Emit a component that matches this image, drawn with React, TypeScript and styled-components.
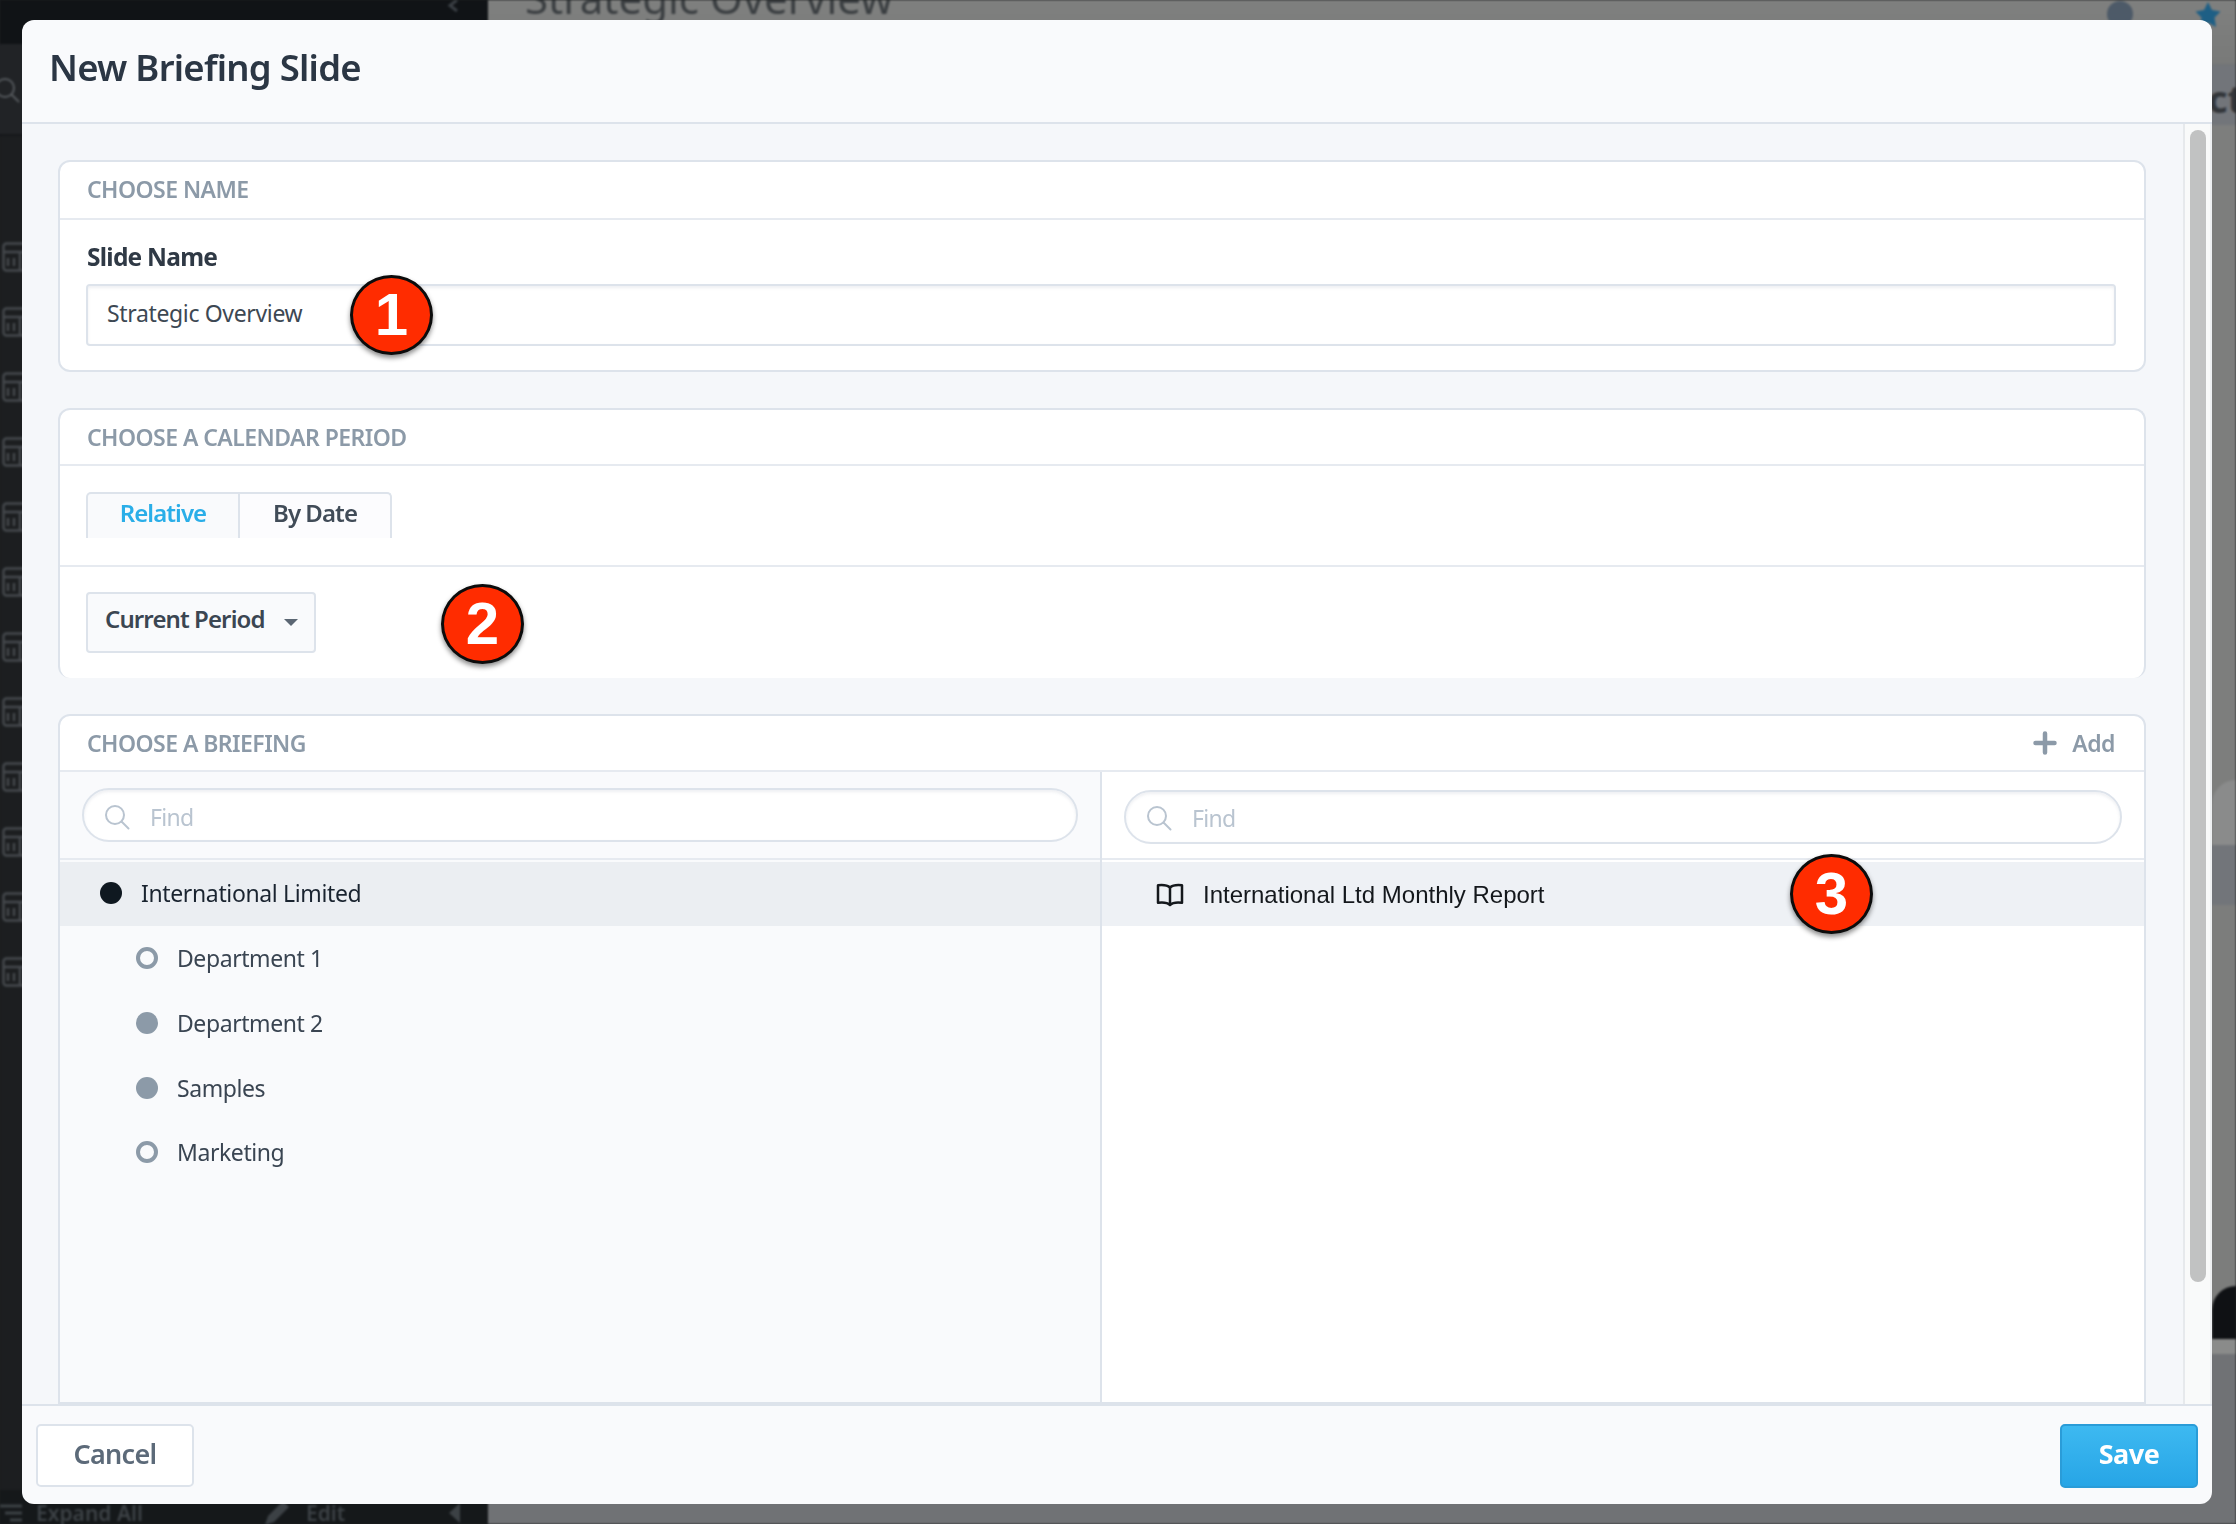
import React from "react";
import styled, { createGlobalStyle } from "styled-components";

const UI_FONT = `"Noto Sans", "Liberation Sans", sans-serif`;
const HELVETICA = `"Liberation Sans", Arial, sans-serif`;

const GlobalStyle = createGlobalStyle`
  html, body {
    margin: 0;
    padding: 0;
    background: #1c1e20;
  }
  * {
    box-sizing: border-box;
  }
`;

const Stage = styled.div`
  position: relative;
  width: 2236px;
  height: 1524px;
  overflow: hidden;
  font-family: ${UI_FONT};
`;

/* the blurred app behind the dialog */
const BackApp = styled.div`
  display: flex;
  width: 100%;
  height: 100%;
  filter: blur(1.2px);
`;

const Sidebar = styled.aside`
  width: 488px;
  display: flex;
  flex-direction: column;
  background: #1c1e20;
  color: #3e4347;
`;

const SidebarTop = styled.div`
  height: 44px;
  background: #101316;
  display: flex;
  justify-content: flex-end;
  padding: 0 28px 0 0;
`;

const SidebarSearch = styled.div`
  height: 92px;
  background: #212326;
  border-bottom: 2px solid #15171a;
  padding: 33px 0 0 0;
  color: #54585c;
  margin-left: -6px;
`;

const SidebarIcons = styled.div`
  flex: 1;
  display: flex;
  flex-direction: column;
  gap: 35px;
  padding: 106px 0 0 2px;
`;

const SidebarFoot = styled.div`
  height: 34px;
  background: #15181a;
  display: flex;
  align-items: center;
  gap: 14px;
  padding-top: 12px;
  font-size: 21px;
  font-weight: 600;
  color: #3c4145;
`;

const FootEdit = styled.span`
  margin-left: 106px;
  display: flex;
  align-items: center;
  gap: 15px;
`;

const FootArrow = styled.span`
  margin-left: 90px;
  width: 0;
  height: 0;
  border-top: 10px solid transparent;
  border-bottom: 10px solid transparent;
  border-right: 11px solid #3c4145;
`;

const MainArea = styled.main`
  flex: 1;
  display: flex;
  flex-direction: column;
  overflow: hidden;
  background: #7a7b7a;
`;

const MainBar = styled.div`
  height: 65px;
  display: flex;
  padding: 0 0 0 37px;
  background: linear-gradient(#7f807f, #797a79);
  border-bottom: 1px solid #707274;
`;

const MainTitle = styled.div`
  font-size: 42px;
  line-height: 44px;
  margin-top: -24px;
  color: #3a3e41;
`;

const MainBarIcons = styled.div`
  margin-left: auto;
  display: flex;
  gap: 62px;
  margin-right: 15px;
`;

const MonthRow = styled.div`
  height: 60px;
  background: #72757a;
  text-align: right;
  font-size: 38px;
  font-weight: 700;
  line-height: 66px;
  color: #33363a;
  margin-right: -8px;
`;

const ChartFill = styled.div<{ $h: number; $bg: string }>`
  height: ${(p) => p.$h}px;
  background: ${(p) => p.$bg};
  display: flex;
  justify-content: flex-end;
  align-items: flex-end;
`;

const Head = styled.div<{ $bg: string; $w: number; $h: number }>`
  width: ${(p) => p.$w}px;
  height: ${(p) => p.$h}px;
  border-radius: ${(p) => p.$h}px 0 0 0;
  background: ${(p) => p.$bg};
`;

const MainBottom = styled.div`
  flex: 1;
  background: #707275;
`;

/* dialog */
const Overlay = styled.div`
  position: absolute;
  inset: 0;
  padding: 20px 24px 20px 22px;
  display: flex;
`;

const Modal = styled.section`
  flex: 1;
  display: flex;
  flex-direction: column;
  border-radius: 12px;
  overflow: hidden;
  background: #f9fafc;
`;

const ModalHeader = styled.header`
  height: 104px;
  flex: none;
  display: flex;
  align-items: center;
  padding: 0 0 8px 27px;
  border-bottom: 2px solid #dde3eb;
`;

const ModalTitle = styled.h1`
  margin: 0;
  font-size: 36.5px;
  font-weight: 600;
  letter-spacing: -0.75px;
  color: #2b3644;
`;

const ModalBody = styled.div`
  flex: 1;
  min-height: 0;
  display: flex;
`;

const ScrollArea = styled.div`
  flex: 1;
  min-width: 0;
  display: flex;
  flex-direction: column;
  gap: 36px;
  padding: 36px 37px 0 36px;
  background: #f5f7fa;
`;

const ScrollGutter = styled.div`
  width: 29px;
  flex: none;
  padding: 6px 0 0 5px;
  background: #f9fafa;
  border-left: 2px solid #e6e9ec;
  border-right: 2px solid #eef0f2;
`;

const ScrollThumb = styled.div`
  width: 16px;
  height: 1152px;
  border-radius: 8px;
  background: #c1c2c2;
`;

const Panel = styled.div<{ $open?: boolean; $grow?: boolean }>`
  display: flex;
  flex-direction: column;
  flex: ${(p) => (p.$grow ? "1" : "none")};
  min-height: 0;
  background: #fff;
  border: 2px solid #dde3eb;
  border-bottom: ${(p) => (p.$open ? "none" : "2px solid #dde3eb")};
  border-radius: 12px 12px ${(p) => (p.$grow ? "0 0" : "12px 12px")};
`;

const PanelHead = styled.div<{ $h: number }>`
  height: ${(p) => p.$h}px;
  flex: none;
  display: flex;
  align-items: center;
  justify-content: space-between;
  padding: 0 29px 0 27px;
  border-bottom: 2px solid #e6eaf0;
`;

const NameHead = styled(PanelHead)`
  padding-bottom: 2px;
`;

const PanelLabel = styled.h2`
  margin: 0;
  font-size: 23px;
  font-weight: 600;
  letter-spacing: -0.55px;
  text-transform: uppercase;
  color: #8c9aa8;
`;

const AddAction = styled.div`
  display: flex;
  align-items: center;
  gap: 15px;
  font-size: 23px;
  font-weight: 600;
  letter-spacing: -0.5px;
  color: #8c9aa8;
`;

const NameBody = styled.div`
  padding: 23px 28px 24px 26px;
`;

const FieldLabel = styled.label`
  display: block;
  height: 28px;
  margin-bottom: 13px;
  padding-left: 1px;
  font-size: 24.5px;
  line-height: 28px;
  font-weight: 700;
  letter-spacing: -0.75px;
  color: #2f3945;
`;

const InputWrap = styled.div`
  position: relative;
`;

const TextInput = styled.div`
  height: 62px;
  display: flex;
  align-items: center;
  padding: 0 19px 4px;
  background: #fff;
  border: 2px solid #dde3eb;
  border-radius: 4px;
  box-shadow: inset 0 2px 3px rgba(120, 135, 155, 0.12);
  font-size: 23px;
  letter-spacing: -0.35px;
  color: #3d4853;
`;

const TabSection = styled.div`
  height: 101px;
  flex: none;
  padding: 26px 26px 0;
  border-bottom: 2px solid #e6eaf0;
`;

const Tabs = styled.div`
  display: flex;
  width: 306px;
  height: 46px;
`;

const Tab = styled.div<{ $active?: boolean; $first?: boolean }>`
  flex: 1;
  display: flex;
  align-items: center;
  justify-content: center;
  padding-bottom: 7px;
  background: ${(p) => (p.$active ? "#f9fafc" : "#fcfcfe")};
  border: 2px solid #dde3eb;
  border-bottom: none;
  border-left: ${(p) => (p.$first ? "2px solid #dde3eb" : "none")};
  border-radius: ${(p) => (p.$first ? "5px 0 0 0" : "0 5px 0 0")};
  font-size: 24px;
  font-weight: 600;
  letter-spacing: -0.95px;
  color: ${(p) => (p.$active ? "#2aaee8" : "#414c58")};
`;

const PeriodSection = styled.div`
  position: relative;
  padding: 25px 26px 25px;
`;

const SelectBox = styled.div`
  width: 230px;
  height: 61px;
  display: flex;
  align-items: center;
  justify-content: space-between;
  padding: 0 16px 8px 17px;
  background: #f9fafc;
  border: 2px solid #dde3eb;
  border-radius: 4px;
  font-size: 24px;
  font-weight: 600;
  letter-spacing: -0.9px;
  color: #3b4652;
`;

const Caret = styled.span`
  width: 0;
  height: 0;
  margin-top: 8px;
  border-left: 7px solid transparent;
  border-right: 7px solid transparent;
  border-top: 7px solid #5b6673;
`;

const Columns = styled.div`
  flex: 1;
  min-height: 0;
  display: flex;
`;

const OrgColumn = styled.div`
  width: 1042px;
  flex: none;
  background: #f9fafc;
  border-right: 2px solid #dde3eb;
`;

const ReportColumn = styled.div`
  flex: 1;
  min-width: 0;
  background: #fff;
`;

const FindRow = styled.div<{ $top: number }>`
  height: 88px;
  padding: ${(p) => p.$top}px 22px 0;
  border-bottom: 2px solid #e6eaf0;
  margin-bottom: 2px;
`;

const FindBox = styled.div<{ $drop: number }>`
  height: 54px;
  display: flex;
  align-items: center;
  gap: 20px;
  padding: ${(p) => p.$drop}px 0 0 20px;
  background: #fff;
  border: 2px solid #dde3eb;
  border-radius: 27px;
  box-shadow: inset 0 2px 3px rgba(120, 135, 155, 0.12);
  color: #b9c4d0;
`;

const FindPlaceholder = styled.span`
  font-size: 23px;
  letter-spacing: -0.7px;
  color: #b9c4d0;
`;

const TreeRow = styled.div<{ $child?: boolean; $selected?: boolean }>`
  height: ${(p) => (p.$selected ? 64 : 64.7)}px;
  display: flex;
  align-items: center;
  gap: 19px;
  padding: 0 0 ${(p) => (p.$selected ? 2 : 0)}px ${(p) => (p.$child ? 76 : 40)}px;
  background: ${(p) => (p.$selected ? "#ebeef2" : "transparent")};
  font-size: 23px;
  letter-spacing: ${(p) => (p.$selected ? -0.36 : -0.42)}px;
  color: ${(p) => (p.$selected ? "#1a2430" : "#3a4552")};
`;

const Dot = styled.span<{ $kind: "root" | "empty" | "full" }>`
  width: 22px;
  height: 22px;
  flex: none;
  border-radius: 50%;
  background: ${(p) => (p.$kind === "root" ? "#0f1820" : p.$kind === "full" ? "#8c9aa8" : "transparent")};
  border: ${(p) => (p.$kind === "empty" ? "4px solid #8c9aa8" : "none")};
`;

const ReportRow = styled.div`
  position: relative;
  height: 64px;
  display: flex;
  align-items: center;
  gap: 19px;
  padding: 2px 0 0 54px;
  background: #eef1f5;
  font-family: ${HELVETICA};
  font-size: 24px;
  color: #14181c;
`;

const Callout = styled.div<{ $left: number; $top: number }>`
  position: absolute;
  left: ${(p) => p.$left}px;
  top: ${(p) => p.$top}px;
  width: 83px;
  height: 80px;
  display: flex;
  align-items: center;
  justify-content: center;
  border-radius: 50%;
  border: 3px solid #0c0c0c;
  background: #ff2c00;
  box-shadow: 0 3px 5px rgba(0, 0, 0, 0.45);
  font-family: ${HELVETICA};
  font-size: 60px;
  font-weight: 700;
  line-height: 1;
  color: #fff;
`;

const ModalFooter = styled.footer`
  height: 100px;
  flex: none;
  display: flex;
  justify-content: space-between;
  padding: 18px 14px 0 14px;
  border-top: 2px solid #dde3eb;
`;

const CancelButton = styled.button`
  width: 158px;
  height: 63px;
  background: #fff;
  border: 2px solid #dde3eb;
  border-radius: 5px;
  font-family: ${UI_FONT};
  font-size: 27px;
  font-weight: 600;
  letter-spacing: -0.7px;
  padding: 0 0 4px;
  color: #5c6a79;
`;

const SaveButton = styled.button`
  width: 138px;
  height: 64px;
  background: linear-gradient(#3db9f1, #27a5e6);
  border: 2px solid #2a9cd8;
  border-radius: 5px;
  font-family: ${UI_FONT};
  font-size: 27px;
  font-weight: 700;
  letter-spacing: -0.5px;
  padding: 0 0 6px;
  color: #fff;
`;

const SearchGlyph = () => (
  <svg width="26" height="26" viewBox="0 0 26 26" fill="none" stroke="currentColor" strokeWidth="2" strokeLinecap="round">
    <circle cx="11" cy="11" r="9" />
    <path d="M17.5 17.5L24.5 24.5" />
  </svg>
);

const PlusGlyph = () => (
  <svg width="24" height="24" viewBox="0 0 24 24" fill="none" stroke="currentColor" strokeWidth="4.5" strokeLinecap="round">
    <path d="M12 2.5V21.5M2.5 12H21.5" />
  </svg>
);

const BookGlyph = () => (
  <svg width="28" height="24" viewBox="0 0 28 24" fill="none" stroke="#14181c" strokeWidth="2.5" strokeLinejoin="round">
    <path d="M14 4.5C11.5 2.2 7 1.6 2 2.2V19.8C7 19.2 11.5 19.6 14 22C16.5 19.6 21 19.2 26 19.8V2.2C21 1.6 16.5 2.2 14 4.5Z" />
    <path d="M14 4.5V22" />
  </svg>
);

const TableGlyph = () => (
  <svg width="30" height="30" viewBox="0 0 30 30" fill="none" stroke="#45494d" strokeWidth="2.4">
    <rect x="1.5" y="1.5" width="27" height="27" rx="3" />
    <path d="M1.5 10H28.5M6 16V24M12 16V24M18 10V28.5" />
  </svg>
);

const BackChevron = () => (
  <svg width="14" height="14" viewBox="0 0 14 14" fill="none" stroke="#3a3f44" strokeWidth="3">
    <path d="M11 0L4 5.5L11 11" />
  </svg>
);

const ListGlyph = () => (
  <svg width="22" height="22" viewBox="0 0 22 22" fill="none" stroke="#3c4145" strokeWidth="3">
    <path d="M0 4H22M5 11H22M10 18H22" />
  </svg>
);

const PencilGlyph = () => (
  <svg width="28" height="28" viewBox="0 0 28 28" fill="#3c4145">
    <path d="M2 26L5 17L20 2L26 8L11 23Z" />
  </svg>
);

const InfoGlyph = () => (
  <svg width="26" height="46" viewBox="0 0 26 46" fill="#4d5a68">
    <circle cx="13" cy="14" r="13" />
  </svg>
);

const StarGlyph = () => (
  <svg width="26" height="46" viewBox="0 0 26 46" fill="#1e5f85">
    <path d="M13 2L17 10L25.5 11.5L19.5 17.5L21 27L13 22.5L5 27L6.5 17.5L.5 11.5L9 10Z" />
  </svg>
);

const org = [
  { name: "Department 1", kind: "empty" as const },
  { name: "Department 2", kind: "full" as const },
  { name: "Samples", kind: "full" as const },
  { name: "Marketing", kind: "empty" as const },
];

const App = () => {
  return (
    <Stage>
      <GlobalStyle />

      <BackApp>
        <Sidebar>
          <SidebarTop>
            <BackChevron />
          </SidebarTop>
          <SidebarSearch>
            <SearchGlyph />
          </SidebarSearch>
          <SidebarIcons>
            {Array.from({ length: 12 }, (_, i) => (
              <TableGlyph key={i} />
            ))}
          </SidebarIcons>
          <SidebarFoot>
            <ListGlyph />
            Expand All
            <FootEdit>
              <PencilGlyph />
              Edit
            </FootEdit>
            <FootArrow />
          </SidebarFoot>
        </Sidebar>
        <MainArea>
          <MainBar>
            <MainTitle>Strategic Overview</MainTitle>
            <MainBarIcons>
              <InfoGlyph />
              <StarGlyph />
            </MainBarIcons>
          </MainBar>
          <MonthRow>Oct</MonthRow>
          <ChartFill $h={720} $bg="#7d7e7d">
            <Head $bg="#8a8b8b" $w={24} $h={65} />
          </ChartFill>
          <ChartFill $h={60} $bg="#72757a" />
          <ChartFill $h={434} $bg="#7c7d7c">
            <Head $bg="#0f1114" $w={24} $h={53} />
          </ChartFill>
          <ChartFill $h={15} $bg="#8a8b8a" />
          <MainBottom />
        </MainArea>
      </BackApp>

      <Overlay>
        <Modal>
          <ModalHeader>
            <ModalTitle>New Briefing Slide</ModalTitle>
          </ModalHeader>

          <ModalBody>
            <ScrollArea>
              <Panel>
                <NameHead $h={58}>
                  <PanelLabel>Choose Name</PanelLabel>
                </NameHead>
                <NameBody>
                  <FieldLabel>Slide Name</FieldLabel>
                  <InputWrap>
                    <TextInput>Strategic Overview</TextInput>
                    <Callout $left={264} $top={-9}>1</Callout>
                  </InputWrap>
                </NameBody>
              </Panel>

              <Panel $open>
                <PanelHead $h={56}>
                  <PanelLabel>Choose a Calendar Period</PanelLabel>
                </PanelHead>
                <TabSection>
                  <Tabs>
                    <Tab $active $first>Relative</Tab>
                    <Tab>By Date</Tab>
                  </Tabs>
                </TabSection>
                <PeriodSection>
                  <SelectBox>
                    Current Period
                    <Caret />
                  </SelectBox>
                  <Callout $left={381} $top={17}>2</Callout>
                </PeriodSection>
              </Panel>

              <Panel $grow>
                <PanelHead $h={56}>
                  <PanelLabel>Choose a Briefing</PanelLabel>
                  <AddAction>
                    <PlusGlyph />
                    Add
                  </AddAction>
                </PanelHead>
                <Columns>
                  <OrgColumn>
                    <FindRow $top={16}>
                      <FindBox $drop={4}>
                        <SearchGlyph />
                        <FindPlaceholder>Find</FindPlaceholder>
                      </FindBox>
                    </FindRow>
                    <TreeRow $selected>
                      <Dot $kind="root" />
                      International Limited
                    </TreeRow>
                    {org.map((item) => (
                      <TreeRow $child key={item.name}>
                        <Dot $kind={item.kind} />
                        {item.name}
                      </TreeRow>
                    ))}
                  </OrgColumn>
                  <ReportColumn>
                    <FindRow $top={18}>
                      <FindBox $drop={2}>
                        <SearchGlyph />
                        <FindPlaceholder>Find</FindPlaceholder>
                      </FindBox>
                    </FindRow>
                    <ReportRow>
                      <BookGlyph />
                      International Ltd Monthly Report
                      <Callout $left={688} $top={-8}>3</Callout>
                    </ReportRow>
                  </ReportColumn>
                </Columns>
              </Panel>
            </ScrollArea>
            <ScrollGutter>
              <ScrollThumb />
            </ScrollGutter>
          </ModalBody>

          <ModalFooter>
            <CancelButton>Cancel</CancelButton>
            <SaveButton>Save</SaveButton>
          </ModalFooter>
        </Modal>
      </Overlay>
    </Stage>
  );
};

export default App;
